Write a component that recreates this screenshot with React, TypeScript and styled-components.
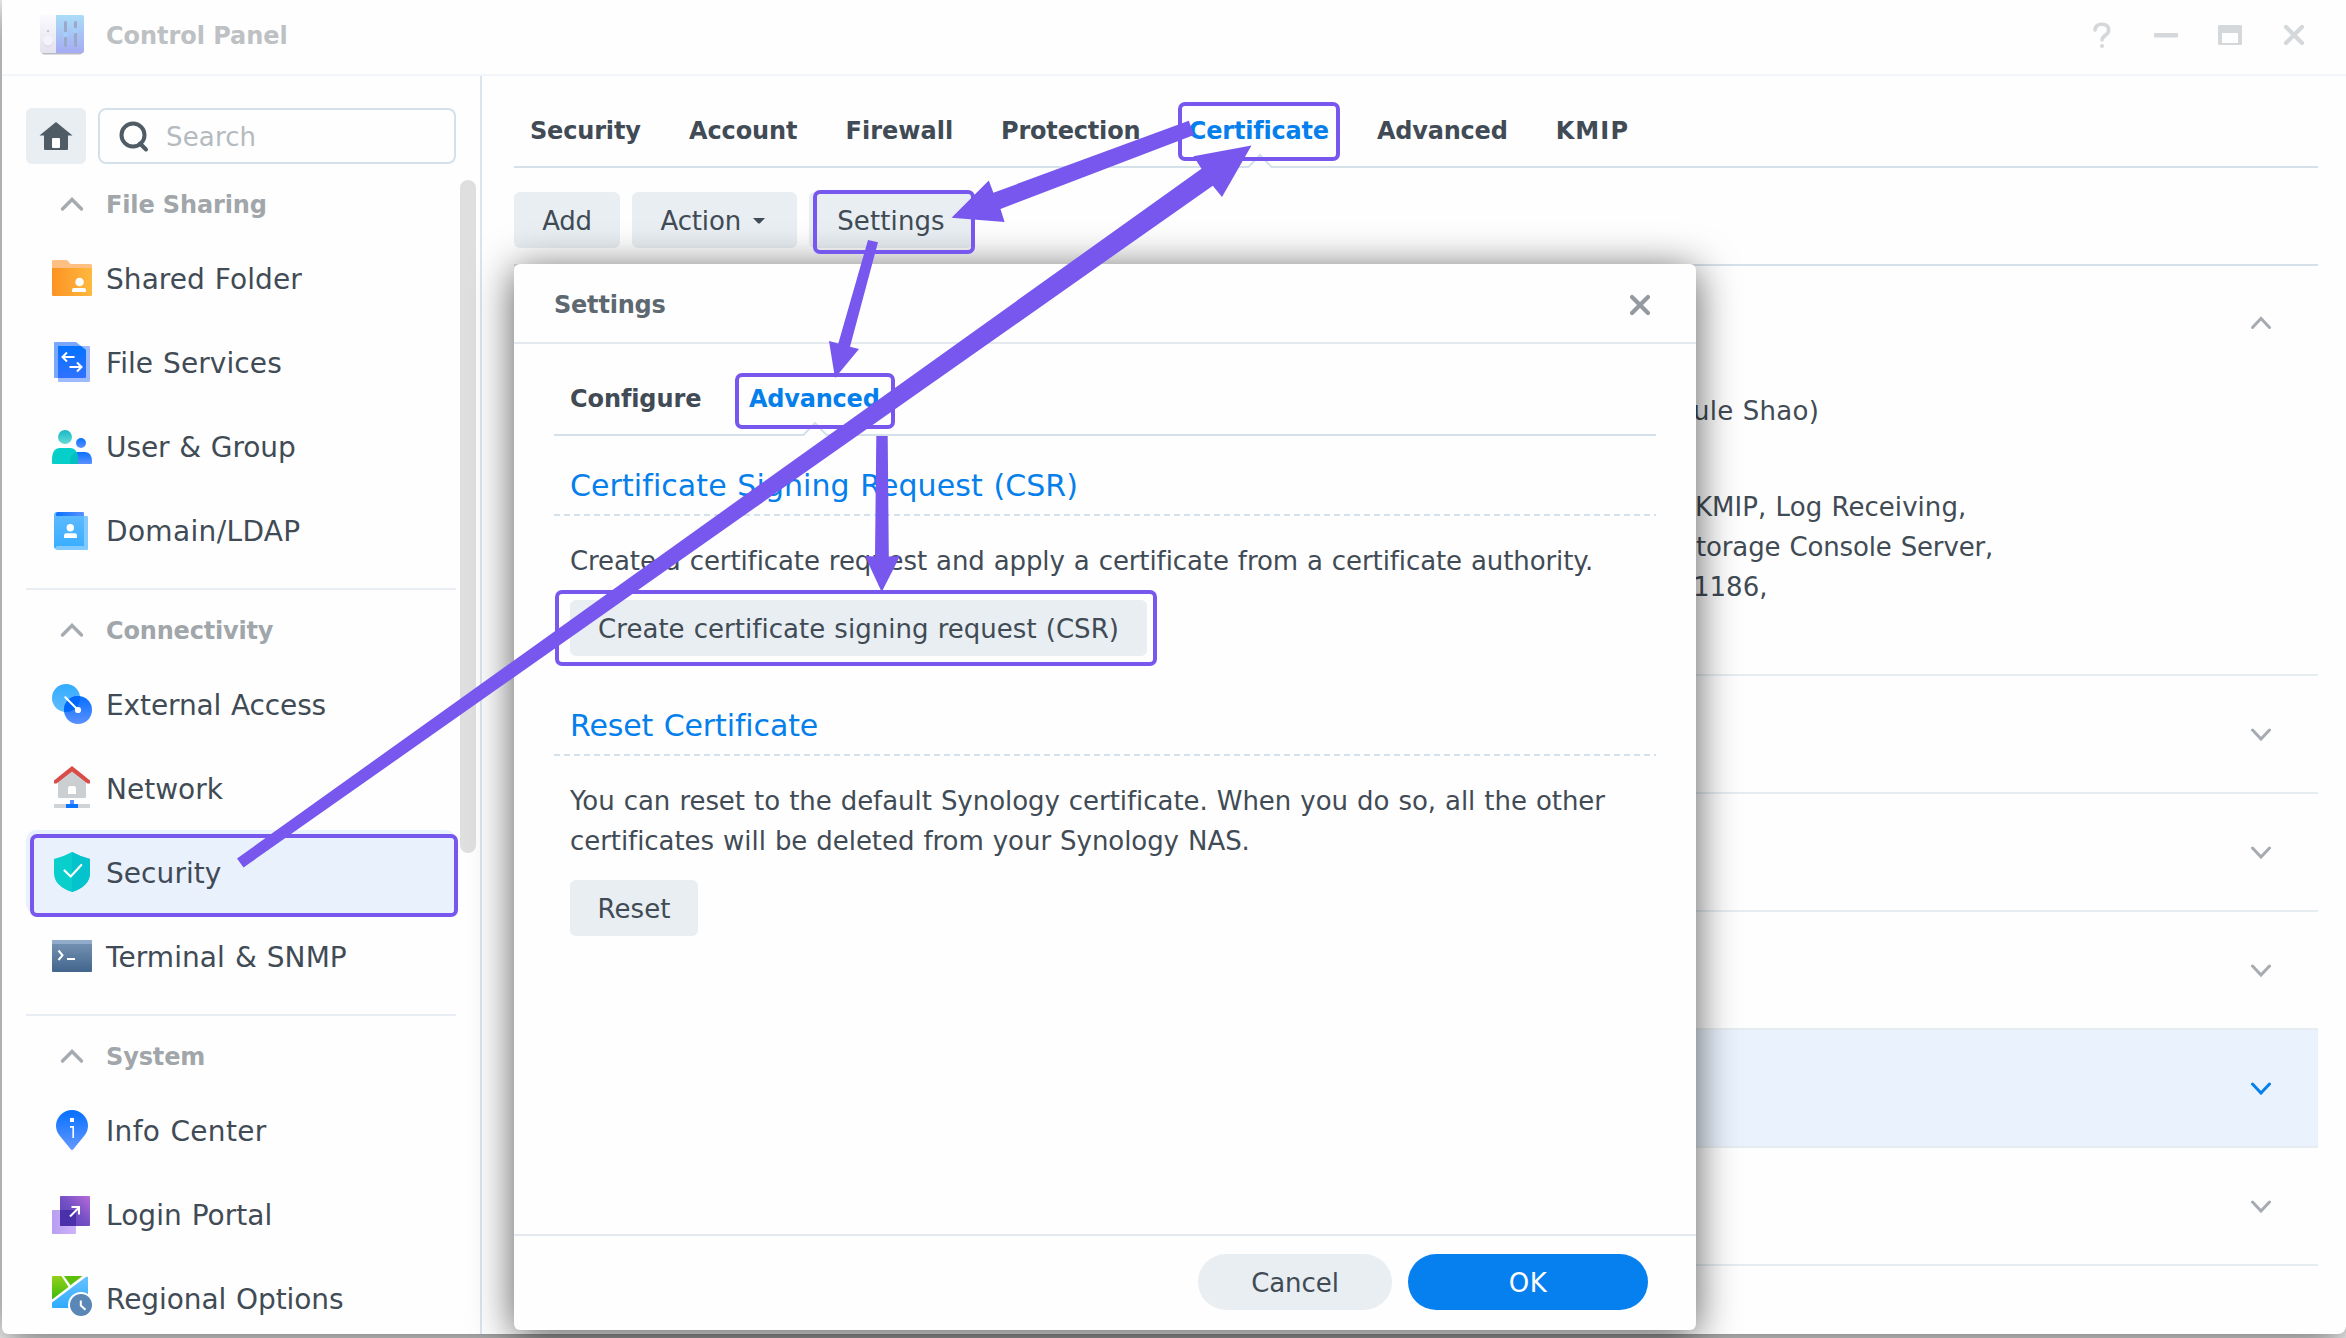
import React from "react";
import styled, { createGlobalStyle, css } from "styled-components";

const FONT = `"DejaVu Sans", Verdana, sans-serif`;
const INK = "#414b55";
const BLUE = "#057feb";
const PURPLE = "#7757ee";
const LINE = "#d5e1ea";
const SOFT = "#e8eef2";

const GlobalStyle = createGlobalStyle`
  * { box-sizing: border-box; }
  html, body { margin: 0; padding: 0; background: #fff; }
  body { font-family: ${FONT}; color: ${INK}; overflow: hidden; }
`;

const Text = styled.span<{ $ls?: number }>`
  letter-spacing: ${(p) => p.$ls ?? 0}px;
  white-space: pre;
`;

const Desktop = styled.div`
  position: relative;
  width: 2346px;
  height: 1338px;
  padding-left: 2px;
  overflow: hidden;
`;

const WindowFrame = styled.div`
  width: 2344px;
  height: 1334px;
  display: flex;
  flex-direction: column;
  background: #fefefe;
  border-radius: 0 0 8px 6px;
  box-shadow: 0 6px 40px rgba(0, 0, 0, 0.65);
`;

const TitleBar = styled.header`
  height: 76px;
  flex: none;
  display: flex;
  align-items: center;
  padding: 0 40px 4px 36px;
  border-bottom: 2px solid #f2f5f9;
`;

const AppTitle = styled.h1`
  margin: 0 auto 0 20px;
  font-size: 24px;
  font-weight: 700;
  color: #bdc1c4;
  ${Text} {
    position: relative;
    top: 0.5px;
  }
`;

const WindowControls = styled.div`
  display: flex;
  align-items: center;
  gap: 40px;
`;

const WindowBody = styled.div`
  flex: 1;
  min-height: 0;
  display: flex;
`;

const Sidebar = styled.aside`
  width: 480px;
  flex: none;
  display: flex;
  flex-direction: column;
  padding: 32px 0 0 24px;
  border-right: 2px solid #dce5ee;
`;

const SearchRow = styled.div`
  display: flex;
  gap: 12px;
  width: 430px;
  height: 56px;
  flex: none;
`;

const HomeButton = styled.button`
  width: 60px;
  padding: 0;
  border: 0;
  border-radius: 6px;
  background: ${SOFT};
  display: grid;
  place-items: center;
`;

const SearchBox = styled.div`
  flex: 1;
  display: flex;
  align-items: center;
  gap: 16px;
  padding-left: 18px;
  border: 2px solid ${LINE};
  border-radius: 8px;
  font-size: 26px;
  color: #b5babf;
  ${Text} {
    padding-top: 2px;
  }
`;

const NavScroll = styled.div`
  flex: 1;
  min-height: 0;
  display: flex;
  gap: 4px;
  overflow: hidden;
`;

const NavList = styled.nav`
  width: 430px;
`;

const Scrollbar = styled.div`
  width: 16px;
  height: 673px;
  margin-top: 16px;
  border-radius: 8px;
  background: #dfdfdf;
`;

const NavGroup = styled.section`
  & + & {
    margin-top: 16px;
    border-top: 2px solid #e8eef3;
  }
`;

const GroupHeader = styled.div`
  height: 72px;
  padding: 9px 0 0 22px;
  display: flex;
  align-items: center;
  gap: 10px;
  font-size: 24px;
  font-weight: 700;
  color: #a0a6aa;
`;

const NavItem = styled.a<{ $selected?: boolean }>`
  height: 84px;
  padding-left: 22px;
  display: flex;
  align-items: center;
  gap: 10px;
  border-radius: 10px;
  font-size: 28px;
  word-spacing: 0.034em;
  background: ${(p) => (p.$selected ? "#e9f1fd" : "transparent")};
  ${Text} {
    padding-top: 2px;
  }
`;

const Main = styled.main`
  flex: 1;
  min-width: 0;
  padding: 0 28px 0 32px;
  display: flex;
  flex-direction: column;
`;

const TabBar = styled.div`
  height: 92px;
  flex: none;
  display: flex;
  gap: 48px;
  padding: 20px 0 0 16px;
  border-bottom: 2px solid ${LINE};
`;

const Tab = styled.div<{ $w: number; $active?: boolean }>`
  position: relative;
  width: ${(p) => p.$w}px;
  line-height: 70px;
  font-size: 24px;
  font-weight: 700;
  color: ${(p) => (p.$active ? BLUE : INK)};
`;

const Notch = styled.svg`
  position: absolute;
  left: calc(50% - 13px);
  bottom: -2px;
`;

const Toolbar = styled.div`
  height: 98px;
  flex: none;
  display: flex;
  gap: 12px;
  padding-top: 24px;
  border-bottom: 2px solid ${LINE};
`;

const buttonBase = css`
  height: 56px;
  padding: 2px 0 0;
  border: 0;
  font-family: ${FONT};
  font-size: 26px;
  word-spacing: 0.034em;
  display: flex;
  align-items: center;
  justify-content: center;
`;

const Button = styled.button<{ $w: number }>`
  ${buttonBase}
  width: ${(p) => p.$w}px;
  gap: 11px;
  border-radius: 6px;
  background: ${SOFT};
  color: ${INK};
`;

const MenuButton = styled(Button)`
  justify-content: flex-start;
  padding-left: 28.5px;
`;

const PillButton = styled.button<{ $w: number; $primary?: boolean }>`
  ${buttonBase}
  width: ${(p) => p.$w}px;
  border-radius: 28px;
  background: ${(p) => (p.$primary ? "#0680ee" : SOFT)};
  color: ${(p) => (p.$primary ? "#fff" : INK)};
`;

const CertRow = styled.div<{ $open?: boolean; $selected?: boolean }>`
  height: ${(p) => (p.$open ? 410 : 118)}px;
  flex: none;
  display: flex;
  justify-content: space-between;
  align-items: ${(p) => (p.$open ? "flex-start" : "center")};
  padding-right: 46px;
  border-bottom: 2px solid #e6edf1;
  background: ${(p) => (p.$selected ? "#e9f2fd" : "transparent")};
  & > svg {
    margin-left: auto;
    margin-top: ${(p) => (p.$open ? 50 : 0)}px;
  }
`;

const CertDetails = styled.div`
  padding: 125px 0 0 1179px;
  font-size: 26px;
  line-height: 40px;
  word-spacing: 0.034em;
`;

const DetailLine = styled.div<{ $indent: number; $gap?: number }>`
  padding-left: ${(p) => p.$indent}px;
  margin-bottom: ${(p) => p.$gap ?? 0}px;
`;

const Dialog = styled.div`
  position: absolute;
  left: 514px;
  top: 264px;
  width: 1182px;
  height: 1066px;
  display: flex;
  flex-direction: column;
  border-radius: 6px;
  background: #fefefe;
  box-shadow: 0 6px 40px rgba(0, 0, 0, 0.65);
`;

const DialogHeader = styled.div`
  height: 80px;
  flex: none;
  display: flex;
  align-items: center;
  justify-content: space-between;
  padding: 3px 44px 0 40px;
  border-bottom: 2px solid #e3e9ef;
  font-size: 24px;
  font-weight: 700;
  color: #5d6870;
`;

const DialogBody = styled.div`
  flex: 1;
  padding: 0 40px;
`;

const DialogFooter = styled.div`
  height: 96px;
  flex: none;
  display: flex;
  justify-content: flex-end;
  gap: 16px;
  padding: 18px 48px 0 0;
  border-top: 2px solid #e3e9ef;
`;

const Fieldset = styled.section`
  margin-bottom: 20px;
`;

const FieldsetTitle = styled.h2`
  margin: 0;
  height: 80px;
  padding: 21px 0 0 16px;
  font-size: 30px;
  font-weight: 400;
  line-height: 57px;
  word-spacing: 0.034em;
  color: ${BLUE};
  background: repeating-linear-gradient(90deg, ${LINE} 0 6px, transparent 6px 10px) left bottom / 100% 2px no-repeat;
`;

const FieldsetBody = styled.div`
  padding: 25px 0 0 16px;
  font-size: 26px;
  line-height: 40px;
  word-spacing: 0.034em;
`;

const Paragraph = styled.p`
  margin: 0 0 19px;
  ${Text} {
    display: block;
  }
`;

const Highlight = styled.div<{ $x: number; $y: number; $w: number; $h: number }>`
  position: absolute;
  left: ${(p) => p.$x}px;
  top: ${(p) => p.$y}px;
  width: ${(p) => p.$w}px;
  height: ${(p) => p.$h}px;
  border: 4px solid ${PURPLE};
  border-radius: 7px;
`;

const ArrowLayer = styled.svg`
  position: absolute;
  left: 0;
  top: 0;
`;

function Chevron({ up, color = "#a5abb0" }: { up?: boolean; color?: string }) {
  return (
    <svg width="22" height="14" viewBox="0 0 22 14" fill="none" stroke={color} strokeWidth="3" strokeLinecap="round">
      <path d={up ? "M2.500 11.500 L11 2.500 L19.500 11.500" : "M2.500 3 L11 12 L19.500 3"} />
    </svg>
  );
}

function CloseIcon({ color }: { color: string }) {
  return (
    <svg width="24" height="24" viewBox="0 0 24 24" stroke={color} strokeWidth="4.200" strokeLinecap="round">
      <path d="M4 4 L20 20 M20 4 L4 20" />
    </svg>
  );
}

function TabNotch() {
  return (
    <Notch width="28" height="15" viewBox="0 0 28 15">
      <path d="M2 13 L14 1.500 L26 13 V15 H2 Z" fill="#fefefe" />
      <path d="M1 14 H2.500 L14 2 L25.500 14 H27" fill="none" stroke={LINE} strokeWidth="2" />
    </Notch>
  );
}

function AppIcon() {
  return (
    <svg width="48" height="44" viewBox="38 14 48 44">
      <defs>
        <linearGradient id="apL" x1="0" y1="0" x2="0" y2="1"><stop offset="0" stopColor="#fafaff" /><stop offset="1" stopColor="#e4e2ee" /></linearGradient>
        <linearGradient id="apR" x1="0" y1="0" x2="0" y2="1"><stop offset="0" stopColor="#abddf7" /><stop offset="1" stopColor="#a5abf3" /></linearGradient>
      </defs>
      <rect x="41.500" y="20" width="41" height="35.500" rx="3" fill="#b9b9c2" />
      <path d="M42 16 H56 V54 H42 a2 2 0 0 1 -2 -2 V18 a2 2 0 0 1 2 -2Z" fill="url(#apL)" />
      <path d="M56 16 H82 a2 2 0 0 1 2 2 V52 a2 2 0 0 1 -2 2 H56Z" fill="url(#apR)" />
      <rect x="64" y="22" width="3" height="26" rx="1.500" fill="#9aa9c8" />
      <rect x="74" y="22" width="3" height="26" rx="1.500" fill="#9aa9c8" />
      <circle cx="65.500" cy="35.500" r="2.800" fill="#a6cdf8" />
      <circle cx="75.500" cy="31.500" r="2.800" fill="#a6cdf8" />
      <circle cx="48" cy="42.600" r="5.200" fill="#d8d6e2" />
      <circle cx="48" cy="41.800" r="5" fill="#f4f3fb" />
      <rect x="47" y="31" width="2" height="2" fill="#c9c8d2" />
    </svg>
  );
}

const iconArt: Record<string, React.ReactNode> = {
  folder: (
    <>
      <defs><linearGradient id="fo" x1="0" y1="0" x2="1" y2="0"><stop offset="0" stopColor="#fb9224" /><stop offset="1" stopColor="#ffb93f" /></linearGradient></defs>
      <path d="M5.500 6 H18 q1.500 0 2.500 1.500 L22.500 10 H42.500 q1.500 0 1.500 1.500 V15 H4 V7.500 q0 -1.500 1.500 -1.500Z" fill="#fdbf82" />
      <path d="M4 14 H44 V40.500 q0 1.500 -1.500 1.500 H5.500 q-1.500 0 -1.500 -1.500Z" fill="url(#fo)" />
      <circle cx="31.600" cy="28" r="4.300" fill="#fff" />
      <path d="M24 38 V36 q0 -2 2 -2 H36 q2 0 2 2 V38Z" fill="#fff" />
    </>
  ),
  file: (
    <>
      <defs><linearGradient id="fi" x1="0" y1="0" x2="0" y2="1"><stop offset="0" stopColor="#0372ff" /><stop offset="1" stopColor="#2f72ff" /></linearGradient></defs>
      <path d="M11 8 H41 q1 0 1 1 V43 q0 1 -1 1 H11 q-1 0 -1 -1Z" fill="#9dbbfb" />
      <path d="M7 4 H28 L38 12 V39 q0 1 -1 1 H7 q-1 0 -1 -1 V5 q0 -1 1 -1Z" fill="#78a8fc" />
      <path d="M10 8 H33 L38 12 V39 q0 1 -1 1 H10Z" fill="url(#fi)" />
      <path d="M26.500 19 H15 M19 14.500 L14.500 19 L19 23.500 M21.500 29 H33 M29 24.500 L33.500 29 L29 33.500" fill="none" stroke="#fff" strokeWidth="2" />
    </>
  ),
  users: (
    <>
      <defs>
        <linearGradient id="u1" x1="0" y1="0" x2="0" y2="1"><stop offset="0" stopColor="#17b9c6" /><stop offset="1" stopColor="#66dad4" /></linearGradient>
        <linearGradient id="u2" x1="0" y1="0" x2="0" y2="1"><stop offset="0" stopColor="#0a72ff" /><stop offset="1" stopColor="#5b90ff" /></linearGradient>
      </defs>
      <circle cx="17" cy="15" r="7" fill="url(#u1)" />
      <circle cx="33" cy="21" r="5" fill="url(#u2)" />
      <path d="M22 42 V40 Q22 30 29 30 H37 Q44 30 44 40 V41 q0 1 -1 1Z" fill="url(#u2)" />
      <path d="M5 42 q-1 0 -1 -1 V38 Q4 26 12 26 H22 Q30 26 30 38 V42Z" fill="#06cfc9" />
      <path d="M22 40 Q22 32.500 28 30.300 Q30 33 30 38 V42 H22Z" fill="#04bfbf" />
    </>
  ),
  domain: (
    <>
      <defs>
        <linearGradient id="d1" x1="0" y1="0" x2="0" y2="1"><stop offset="0" stopColor="#60bbff" /><stop offset="1" stopColor="#37adff" /></linearGradient>
        <linearGradient id="d2" x1="0" y1="0" x2="1" y2="0"><stop offset="0" stopColor="#0a72ff" /><stop offset="1" stopColor="#5b90ff" /></linearGradient>
      </defs>
      <path d="M9 10 H39 q1 0 1 1 V43 q0 1 -1 1 H9 q-2 0 -2 -2Z" fill="#82cafe" />
      <path d="M6 9 q0 -3 3 -3 H12 V10 H36 V40 H9 q-1.500 0 -1.500 2.500 Q6 42 6 41Z" fill="url(#d1)" />
      <path d="M8 8 q0 -2 2 -2 H35 q1 0 1 1 V10 H9 q-1 0 -1 -1Z" fill="url(#d2)" />
      <circle cx="22.300" cy="21.700" r="3.700" fill="#fff" />
      <path d="M16 32 V29.500 q0 -2.200 2.200 -2.200 H26.800 q2.200 0 2.200 2.200 V32Z" fill="#fff" />
    </>
  ),
  external: (
    <>
      <defs>
        <linearGradient id="e1" x1="0" y1="0" x2="0" y2="1"><stop offset="0" stopColor="#32abff" /><stop offset="1" stopColor="#62bcff" /></linearGradient>
        <linearGradient id="e2" x1="0" y1="0" x2="0" y2="1"><stop offset="0" stopColor="#0570ff" /><stop offset="1" stopColor="#5b90ff" /></linearGradient>
        <clipPath id="ec"><circle cx="18" cy="18" r="14" /></clipPath>
      </defs>
      <circle cx="18" cy="18" r="14" fill="url(#e1)" />
      <circle cx="30" cy="30" r="14" fill="url(#e2)" />
      <circle cx="30" cy="30" r="14" fill="#0068fa" clipPath="url(#ec)" />
      <path d="M17.300 17.300 L30 30" stroke="#fff" strokeWidth="2" strokeLinecap="round" />
      <circle cx="30" cy="30" r="3.100" fill="#fff" />
    </>
  ),
  network: (
    <>
      <path d="M10 16 L24 5 L38 16 V33 q0 1 -1 1 H11 q-1 0 -1 -1Z" fill="#cccfd2" />
      <path d="M20 30 V24.500 q0 -2.500 2.500 -2.500 H25.500 q2.500 0 2.500 2.500 V30Z" fill="#fff" />
      <path d="M6 16.500 L24 2 L42 16.500 V19.500 H39.500 L24 7.500 L8.500 19.500 H6Z" fill="#d94c47" />
      <rect x="6" y="40" width="36" height="4" fill="#cfd3d6" />
      <path d="M18 40 H30 V44 H18Z" fill="#0a74ff" />
      <rect x="22" y="36" width="4" height="4" fill="#5590ff" />
    </>
  ),
  shield: (
    <>
      <path d="M24 4 Q33 9 42 11 V25 Q42 38 24 44 Q6 38 6 25 V11 Q15 9 24 4Z" fill="#08cfcb" />
      <path d="M24 4 Q33 9 42 11 V25 Q42 38 24 44Z" fill="#04c3cd" />
      <path d="M16.500 22.500 L22.700 28.500 L33.300 17" fill="none" stroke="#fff" strokeWidth="2.200" strokeLinecap="round" strokeLinejoin="round" />
    </>
  ),
  terminal: (
    <>
      <defs><linearGradient id="te" x1="0" y1="0" x2="0" y2="1"><stop offset="0" stopColor="#7896b5" /><stop offset="1" stopColor="#43658c" /></linearGradient></defs>
      <path d="M5 8 H43 q1 0 1 1 V39 q0 1 -1 1 H5 q-1 0 -1 -1 V9 q0 -1 1 -1Z" fill="url(#te)" />
      <path d="M5 8 H43 q1 0 1 1 V12 H4 V9 q0 -1 1 -1Z" fill="#91acca" />
      <path d="M10.500 18.500 L14.500 23.300 L10.500 28" fill="none" stroke="#fff" strokeWidth="2" />
      <path d="M19 27 H27" stroke="#fff" strokeWidth="2" />
    </>
  ),
  info: (
    <>
      <defs><linearGradient id="inf" x1="0" y1="0" x2="0" y2="1"><stop offset="0" stopColor="#0470ff" /><stop offset="1" stopColor="#6497ff" /></linearGradient></defs>
      <path d="M24 4 A16 16 0 0 1 40 20 Q40 25 36.500 29.500 L25.500 43 Q24 45 22.500 43 L11.500 29.500 Q8 25 8 20 A16 16 0 0 1 24 4Z" fill="url(#inf)" />
      <rect x="22" y="12" width="4" height="4" fill="#fff" />
      <path d="M22 20 H26 V32 H24.400 V21.700 H22Z" fill="#fff" />
    </>
  ),
  login: (
    <>
      <defs>
        <linearGradient id="lo" x1="0" y1="1" x2="1" y2="0"><stop offset="0" stopColor="#5b3db5" /><stop offset="0.500" stopColor="#7350c4" /><stop offset="1" stopColor="#b86bd8" /></linearGradient>
        <linearGradient id="lp" x1="0" y1="0" x2="1" y2="0"><stop offset="0" stopColor="#b99df0" /><stop offset="1" stopColor="#ceb4fc" /></linearGradient>
      </defs>
      <rect x="4" y="20" width="24" height="24" rx="1" fill="url(#lp)" />
      <rect x="12" y="6" width="30" height="30" rx="1" fill="url(#lo)" />
      <path d="M12 20 H28 V36 H13 q-1 0 -1 -1Z" fill="#4a30ab" />
      <path d="M22 26.500 L31 17.500 M23.500 17 H31 V24.500" fill="none" stroke="#fff" strokeWidth="2" />
    </>
  ),
  regional: (
    <>
      <defs>
        <linearGradient id="r1" x1="0" y1="0" x2="0" y2="1"><stop offset="0" stopColor="#93d01b" /><stop offset="1" stopColor="#3cba0a" /></linearGradient>
        <linearGradient id="r2" x1="0" y1="0" x2="0" y2="1"><stop offset="0" stopColor="#6ac2ff" /><stop offset="1" stopColor="#2eabff" /></linearGradient>
      </defs>
      <path d="M5 2 H13.500 L20.500 13 L4 25.500 V3 q0 -1 1 -1Z" fill="url(#r1)" />
      <path d="M16 2 H34.500 L22.500 11.300Z" fill="#5cbf0a" />
      <path d="M40 3 V34 H5 q-1 0 -1 -1 V28.500 L38.500 2.500Z" fill="url(#r2)" />
      <circle cx="33" cy="31" r="13" fill="#fff" />
      <circle cx="33" cy="31" r="11" fill="#5a87b5" />
      <path d="M32.800 26.500 V31.500 L37.500 35.700" fill="none" stroke="#fff" strokeWidth="2" />
    </>
  ),
};

function NavIcon({ name }: { name: string }) {
  return (
    <svg width="48" height="48" viewBox="0 0 48 48">
      {iconArt[name]}
    </svg>
  );
}

interface NavEntry {
  icon: string;
  label: string;
  ls: number;
  selected?: boolean;
}

const groups: { title: string; ls: number; items: NavEntry[] }[] = [
  {
    title: "File Sharing", ls: -0.13,
    items: [
      { icon: "folder", label: "Shared Folder", ls: 0.06 },
      { icon: "file", label: "File Services", ls: 0.08 },
      { icon: "users", label: "User & Group", ls: -0.08 },
      { icon: "domain", label: "Domain/LDAP", ls: 0.34 },
    ],
  },
  {
    title: "Connectivity", ls: -0.18,
    items: [
      { icon: "external", label: "External Access", ls: -0.12 },
      { icon: "network", label: "Network", ls: 0 },
      { icon: "shield", label: "Security", ls: 0.06, selected: true },
      { icon: "terminal", label: "Terminal & SNMP", ls: 0.08 },
    ],
  },
  {
    title: "System", ls: -0.12,
    items: [
      { icon: "info", label: "Info Center", ls: 0.32 },
      { icon: "login", label: "Login Portal", ls: 0.04 },
      { icon: "regional", label: "Regional Options", ls: -0.07 },
    ],
  },
];

const mainTabs = [
  { label: "Security", w: 111, ls: -0.17 },
  { label: "Account", w: 108.5, ls: -0.12 },
  { label: "Firewall", w: 107.5, ls: 0.03 },
  { label: "Protection", w: 139.8, ls: -0.18 },
  { label: "Certificate", w: 140.2, ls: -0.2, active: true },
  { label: "Advanced", w: 130.7, ls: -0.22 },
  { label: "KMIP", w: 75, ls: 1.1 },
];

const dialogTabs = [
  { label: "Configure", w: 131, ls: -0.1 },
  { label: "Advanced", w: 130, ls: -0.22, active: true },
];

const highlights = [
  { x: 30, y: 834, w: 428, h: 83 },
  { x: 1178, y: 102, w: 162, h: 59 },
  { x: 813, y: 190, w: 162, h: 64 },
  { x: 735, y: 373, w: 160, h: 56 },
  { x: 555, y: 590, w: 602, h: 76 },
];

const arrows = [
  "237,858.5 1201.5,168.7 1193.4,156.3 1251.5,145.5 1222,197 1212.8,185.7 243.5,867.5",
  "1188.8,120.7 1194,135 1000.5,209 1004.6,222 951.5,217.7 988.8,180.5 993.4,192.7",
  "868,240 878,242.3 850,346.7 859,349 835,378 829,341 838.3,343.5",
  "876.3,436 887.7,436 888.8,556.5 900,556 881.7,592 865,556 875,556.5",
];

function Tabs({ tabs }: { tabs: { label: string; w: number; ls: number; active?: boolean }[] }) {
  return (
    <TabBar>
      {tabs.map((t) => (
        <Tab key={t.label} $w={t.w} $active={t.active}>
          <Text $ls={t.ls}>{t.label}</Text>
          {t.active && <TabNotch />}
        </Tab>
      ))}
    </TabBar>
  );
}

function SettingsDialog() {
  return (
    <Dialog>
      <DialogHeader>
        <Text $ls={-0.22}>Settings</Text>
        <CloseIcon color="#949a9f" />
      </DialogHeader>
      <DialogBody>
        <Tabs tabs={dialogTabs} />
        <Fieldset>
          <FieldsetTitle><Text $ls={0.08}>Certificate Signing Request (CSR)</Text></FieldsetTitle>
          <FieldsetBody>
            <Paragraph>
              <Text $ls={-0.1}>Create a certificate request and apply a certificate from a certificate authority.</Text>
            </Paragraph>
            <Button $w={577}><Text $ls={0.02}>Create certificate signing request (CSR)</Text></Button>
          </FieldsetBody>
        </Fieldset>
        <Fieldset>
          <FieldsetTitle><Text $ls={-0.12}>Reset Certificate</Text></FieldsetTitle>
          <FieldsetBody>
            <Paragraph>
              <Text $ls={-0.055}>You can reset to the default Synology certificate. When you do so, all the other</Text>
              <Text $ls={-0.06}>certificates will be deleted from your Synology NAS.</Text>
            </Paragraph>
            <Button $w={128}><Text $ls={0.1}>Reset</Text></Button>
          </FieldsetBody>
        </Fieldset>
      </DialogBody>
      <DialogFooter>
        <PillButton $w={194}><Text $ls={-0.07}>Cancel</Text></PillButton>
        <PillButton $w={240} $primary><Text $ls={0.4}>OK</Text></PillButton>
      </DialogFooter>
    </Dialog>
  );
}

export default function App() {
  return (
    <>
      <GlobalStyle />
      <Desktop>
        <WindowFrame>
          <TitleBar>
            <AppIcon />
            <AppTitle><Text $ls={-0.05}>Control Panel</Text></AppTitle>
            <WindowControls>
              <svg width="24" height="28" viewBox="0 0 24 28" fill="none" stroke="#d4d8db" strokeWidth="3.600" strokeLinecap="round">
                <path d="M5 9 Q5.500 3.300 11.800 3.300 Q18.700 3.300 18.700 9.300 Q18.700 12 15 14.500 Q12 17 12 19" />
                <path d="M12 25 V25.100" strokeWidth="4" />
              </svg>
              <svg width="24" height="24" viewBox="0 0 24 24"><rect y="10" width="24" height="4.500" rx="1" fill="#d4d8db" /></svg>
              <svg width="24" height="24" viewBox="0 0 24 24">
                <path fillRule="evenodd" d="M1.500 2 H22.500 q1.500 0 1.500 1.500 V20.500 q0 1.500 -1.500 1.500 H1.500 q-1.500 0 -1.500 -1.500 V3.500 q0 -1.500 1.500 -1.500Z M4 10 V20 H20 V10Z" fill="#d4d8db" />
              </svg>
              <CloseIcon color="#d4d8db" />
            </WindowControls>
          </TitleBar>
          <WindowBody>
            <Sidebar>
              <SearchRow>
                <HomeButton>
                  <svg width="34" height="30" viewBox="0 0 34 30">
                    <path d="M17 1 L33.500 14.500 H29 V28 q0 1 -1 1 H6 q-1 0 -1 -1 V14.500 H0.500Z" fill="#4f5b65" />
                    <rect x="13" y="17" width="8" height="10" rx="1" fill="#fff" />
                  </svg>
                </HomeButton>
                <SearchBox>
                  <svg width="32" height="34" viewBox="0 0 32 34" fill="none" stroke="#4f5b65" strokeWidth="4">
                    <circle cx="15" cy="16" r="11.500" />
                    <path d="M22 24.500 L28 30.500" strokeLinecap="round" />
                  </svg>
                  <Text $ls={0.15}>Search</Text>
                </SearchBox>
              </SearchRow>
              <NavScroll>
                <NavList>
                  {groups.map((g) => (
                    <NavGroup key={g.title}>
                      <GroupHeader>
                        <svg width="48" height="16" viewBox="0 0 48 16" fill="none" stroke="#a5abb0" strokeWidth="3.500" strokeLinecap="round">
                          <path d="M14.500 12 L24 2.500 L33.500 12" />
                        </svg>
                        <Text $ls={g.ls}>{g.title}</Text>
                      </GroupHeader>
                      {g.items.map((it) => (
                        <NavItem key={it.label} $selected={it.selected}>
                          <NavIcon name={it.icon} />
                          <Text $ls={it.ls}>{it.label}</Text>
                        </NavItem>
                      ))}
                    </NavGroup>
                  ))}
                </NavList>
                <Scrollbar />
              </NavScroll>
            </Sidebar>
            <Main>
              <Tabs tabs={mainTabs} />
              <Toolbar>
                <Button $w={106}><Text $ls={-0.2}>Add</Text></Button>
                <MenuButton $w={165}>
                  <Text $ls={-0.15}>Action</Text>
                  <svg width="14" height="8" viewBox="0 0 14 8"><path d="M1 1 H13 L8.200 6 Q7 7 5.800 6Z" fill={INK} /></svg>
                </MenuButton>
                <Button $w={164}><Text $ls={0.1}>Settings</Text></Button>
              </Toolbar>
              <CertRow $open>
                <CertDetails>
                  <DetailLine $indent={0} $gap={56}><Text $ls={0.25}>ule Shao)</Text></DetailLine>
                  <DetailLine $indent={2}><Text $ls={0.06}>KMIP, Log Receiving,</Text></DetailLine>
                  <DetailLine $indent={3}><Text $ls={-0.14}>torage Console Server,</Text></DetailLine>
                  <DetailLine $indent={0}><Text>1186,</Text></DetailLine>
                </CertDetails>
                <Chevron up />
              </CertRow>
              <CertRow><Chevron /></CertRow>
              <CertRow><Chevron /></CertRow>
              <CertRow><Chevron /></CertRow>
              <CertRow $selected><Chevron color={BLUE} /></CertRow>
              <CertRow><Chevron /></CertRow>
            </Main>
          </WindowBody>
        </WindowFrame>
        <SettingsDialog />
        {highlights.map((h) => (
          <Highlight key={h.y} $x={h.x} $y={h.y} $w={h.w} $h={h.h} />
        ))}
        <ArrowLayer width="2346" height="1338" viewBox="0 0 2346 1338" fill={PURPLE}>
          {arrows.map((points) => (
            <polygon key={points} points={points} />
          ))}
        </ArrowLayer>
      </Desktop>
    </>
  );
}
